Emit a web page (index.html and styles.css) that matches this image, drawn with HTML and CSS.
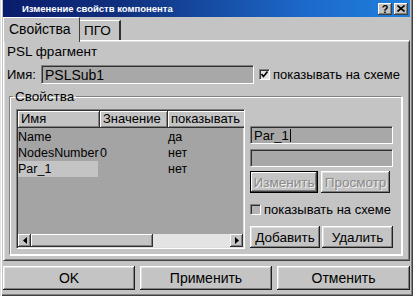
FILE: index.html
```html
<!DOCTYPE html>
<html lang="ru">
<head>
    <meta charset="UTF-8">
    <title>Изменение свойств компонента</title>
    <link rel="stylesheet" href="styles.css">
</head>
<body>
<div class="window">
    <div class="titlebar">
        <span class="title">Изменение свойств компонента</span>
        <span class="tb-btn help">?</span>
        <span class="tb-btn">
            <svg width="8" height="7" viewBox="0 0 8 7"><path d="M0.5 0.5 L7.5 6.5 M7.5 0.5 L0.5 6.5" stroke="#000" stroke-width="1.6"/></svg>
        </span>
    </div>

    <div class="tabs">
        <div class="tab active">Свойства</div>
        <div class="tab">ПГО</div>
    </div>

    <div class="panel">
        <div class="caption">PSL фрагмент</div>
        <div class="name-row">
            <span class="label">Имя:</span>
            <div class="field name-field">PSLSub1</div>
            <div class="check">
                <span class="box checked">
                    <svg width="7" height="7" viewBox="0 0 7 7"><path d="M0.5 3 L2.5 5.5 L6.5 0.5" stroke="#000" stroke-width="1.6" fill="none"/></svg>
                </span>
                показывать на схеме
            </div>
        </div>

        <fieldset class="group">
            <legend>Свойства</legend>
            <div class="group-body">
                <div class="list">
                    <div class="list-head">
                        <div class="col c1">Имя</div>
                        <div class="col c2">Значение</div>
                        <div class="col c3">показывать</div>
                    </div>
                    <div class="list-rows">
                        <div class="row"><span class="c1">Name</span><span class="c2"></span><span class="c3">да</span></div>
                        <div class="row"><span class="c1">NodesNumber</span><span class="c2">0</span><span class="c3">нет</span></div>
                        <div class="row"><span class="c1 selected">Par_1</span><span class="c2"></span><span class="c3">нет</span></div>
                    </div>
                    <div class="hscroll">
                        <span class="arrow">
                            <svg width="4" height="7" viewBox="0 0 4 7"><path d="M4 0 L0 3.5 L4 7 Z" fill="#000"/></svg>
                        </span>
                        <span class="thumb"></span>
                        <span class="track"></span>
                        <span class="arrow">
                            <svg width="4" height="7" viewBox="0 0 4 7"><path d="M0 0 L4 3.5 L0 7 Z" fill="#000"/></svg>
                        </span>
                    </div>
                </div>

                <div class="side">
                    <div class="field small">Par_1<span class="caret"></span></div>
                    <div class="field small second"></div>
                    <div class="btn-row first">
                        <span class="btn disabled focused w68">Изменить</span>
                        <span class="btn disabled w69">Просмотр</span>
                    </div>
                    <div class="check side-check">
                        <span class="box"></span>
                        показывать на схеме
                    </div>
                    <div class="btn-row last">
                        <span class="btn w70">Добавить</span>
                        <span class="btn w71">Удалить</span>
                    </div>
                </div>
            </div>
        </fieldset>
    </div>

    <div class="footer">
        <span class="btn big">OK</span>
        <span class="btn big">Применить</span>
        <span class="btn big wide">Отменить</span>
    </div>
</div>
</body>
</html>
```

FILE: styles.css
```css
body {
    margin: 0;
    font-family: "Liberation Sans", Arial, sans-serif;
    font-size: 13px;
    color: #000;
    background-color: #c4c4c4;
}

.window {
    width: 413px;
    height: 296px;
    box-sizing: border-box;
    padding: 0 3px;
    background-color: #c4c4c4;
    box-shadow: inset 1px 0 #e0e0e0, inset 2px 0 #fff, inset -1px -1px #404040, inset -2px -2px #808080;
    overflow: hidden;
}

/* title bar */
.titlebar {
    height: 17px;
    display: flex;
    align-items: center;
    padding: 0 2px 0 19px;
    background: linear-gradient(to right, #0a1c6c 0%, #10317f 30%, #1c6acb 75%, #2080dc 100%);
}
.title {
    flex: 1;
    color: #fff;
    font-weight: bold;
    font-size: 9.5px;
    white-space: nowrap;
}
.tb-btn {
    width: 14px;
    height: 12px;
    margin-left: 2px;
    display: flex;
    align-items: center;
    justify-content: center;
    background-color: #c4c4c4;
    box-shadow: inset -1px -1px #404040, inset 1px 1px #fff, inset -2px -2px #808080;
    font-weight: bold;
    font-size: 11px;
    line-height: 12px;
}

/* tabs */
.tabs {
    height: 23px;
    display: flex;
    align-items: flex-end;
}
.tab {
    height: 20px;
    line-height: 20px;
    padding: 0 6px;
    border-top: 1px solid #fff;
    border-left: 1px solid #fff;
    border-right: 2px solid #303030;
    box-sizing: border-box;
    position: relative;
}
.tab.active {
    height: 25px;
    line-height: 23px;
    width: 77px;
    padding: 0 0 0 5px;
    margin-bottom: -2px;
    border-right: 1px solid #404040;
    background-color: #c4c4c4;
    font-size: 14px;
    z-index: 1;
}
.tab:not(.active) {
    width: 41px;
    padding: 0 0 0 4px;
    border-left: none;
    font-size: 13.5px;
}

/* main panel */
.panel {
    height: 221px;
    box-sizing: border-box;
    padding: 3px 0 0 3px;
    border-top: 1px solid #fff;
    border-left: 1px solid #fff;
    border-right: 1px solid #404040;
    border-bottom: 1px solid #404040;
    box-shadow: inset 1px 1px #dfdfdf, inset -1px -1px #808080;
}
.caption {
    height: 16px;
    line-height: 16px;
    font-size: 13.5px;
}
.name-row {
    height: 19px;
    margin-top: 5px;
    display: flex;
    align-items: center;
}
.label {
    width: 34px;
}
.field {
    box-sizing: border-box;
    background-color: #a8a8a8;
    border-top: 1px solid #808080;
    border-left: 1px solid #808080;
    border-right: 1px solid #fff;
    border-bottom: 1px solid #fff;
    box-shadow: inset 1px 1px #303030;
    padding-left: 3px;
    display: flex;
    align-items: center;
}
.name-field {
    width: 213px;
    height: 19px;
    font-size: 14px;
}
.check {
    display: flex;
    align-items: center;
    gap: 3px;
    margin-left: 5px;
    font-size: 13px;
    white-space: nowrap;
}
.box {
    width: 11px;
    height: 11px;
    flex-shrink: 0;
    box-sizing: border-box;
    background-color: #b4b4b4;
    border-top: 1px solid #808080;
    border-left: 1px solid #808080;
    border-right: 1px solid #fff;
    border-bottom: 1px solid #fff;
    box-shadow: inset 1px 1px #303030;
    display: flex;
    align-items: center;
    justify-content: center;
}
.box.checked {
    background-color: #e4e4e4;
}

/* group box */
.group {
    width: 393px;
    box-sizing: border-box;
    margin: 5px 0 0 2px;
    padding: 5px 6px 5px 6px;
    border-color: #808080 #fff #fff #808080;
    border-style: solid;
    border-width: 1px;
    box-shadow: 1px 1px #fff, inset 1px 1px #fff;
}
.group legend {
    padding: 0 2px;
    margin-left: -3px;
    line-height: 15px;
    font-size: 13.5px;
}
.group-body {
    display: flex;
}

/* list */
.list {
    width: 229px;
    height: 140px;
    flex-shrink: 0;
    box-sizing: border-box;
    background-color: #a4a4a4;
    border-top: 1px solid #808080;
    border-left: 1px solid #808080;
    border-right: 1px solid #fff;
    border-bottom: 1px solid #fff;
    box-shadow: inset 1px 1px #303030, inset -1px -1px #dfdfdf;
    padding: 1px;
    display: flex;
    flex-direction: column;
    overflow: hidden;
}
.list-head {
    height: 17px;
    display: flex;
    flex-shrink: 0;
}
.col {
    box-sizing: border-box;
    height: 17px;
    line-height: 16px;
    padding-left: 3px;
    background-color: #c4c4c4;
    box-shadow: inset -1px -1px #303030, inset 1px 1px #fff, inset -2px -2px #808080;
    white-space: nowrap;
    overflow: hidden;
}
.c1 {
    width: 82px;
    flex-shrink: 0;
    overflow: hidden;
}
.c2 {
    width: 68px;
    flex-shrink: 0;
}
.c3 {
    width: 80px;
    flex-shrink: 0;
}
.list-rows {
    flex: 1;
    padding-top: 1px;
    font-size: 12.5px;
}
.row {
    height: 16px;
    line-height: 16px;
    display: flex;
    white-space: nowrap;
}
.row .c1 {
    padding-left: 0;
}
.row .c3 {
    padding-left: 0;
}
.row .selected {
    width: 80px;
    background-color: #c4c4c4;
    margin-right: 2px;
}
.hscroll {
    height: 13px;
    display: flex;
    flex-shrink: 0;
}
.hscroll .arrow {
    width: 13px;
    height: 13px;
    display: flex;
    align-items: center;
    justify-content: center;
    background-color: #c4c4c4;
    box-shadow: inset -1px -1px #303030, inset 1px 1px #fff, inset -2px -2px #808080;
}
.hscroll .thumb {
    width: 122px;
    background-color: #c4c4c4;
    box-shadow: inset -1px -1px #303030, inset 1px 1px #fff, inset -2px -2px #808080;
}
.hscroll .track {
    flex: 1;
    background-color: #e4e4e4;
}

/* right column */
.side {
    width: 143px;
    flex-shrink: 0;
    margin-left: 5px;
    padding-top: 17px;
}
.field.small {
    height: 18px;
    font-size: 13px;
}
.field.second {
    margin-top: 5px;
}
.caret {
    display: inline-block;
    width: 1px;
    height: 13px;
    margin-left: 1px;
    background-color: #000;
}
.btn-row {
    display: flex;
}
.btn-row.first {
    margin-top: 4px;
    gap: 3px;
}
.btn-row.last {
    margin-top: 9px;
    gap: 2px;
}
.side-check {
    height: 15px;
    margin: 9px 0 0 0;
}
.btn {
    height: 22px;
    box-sizing: border-box;
    display: flex;
    align-items: center;
    justify-content: center;
    background-color: #c4c4c4;
    box-shadow: inset -1px -1px #202020, inset 1px 1px #fff, inset -2px -2px #808080, inset 2px 2px #dfdfdf;
    font-size: 13.5px;
}
.btn.disabled {
    color: #8a8a8a;
    text-shadow: 1px 1px #f0f0f0;
}
.btn.focused {
    box-shadow: inset 0 0 0 1px #000, inset -2px -2px #404040, inset 2px 2px #fff, inset -3px -3px #808080;
}
.w68 { width: 68px; }
.w69 { width: 69px; }
.w70 { width: 70px; }
.w71 { width: 71px; }

/* bottom buttons */
.footer {
    margin-top: 5px;
    display: flex;
    gap: 5px;
}
.btn.big {
    width: 132px;
    height: 24px;
    font-size: 14px;
}
.btn.big.wide {
    width: 133px;
}
```
